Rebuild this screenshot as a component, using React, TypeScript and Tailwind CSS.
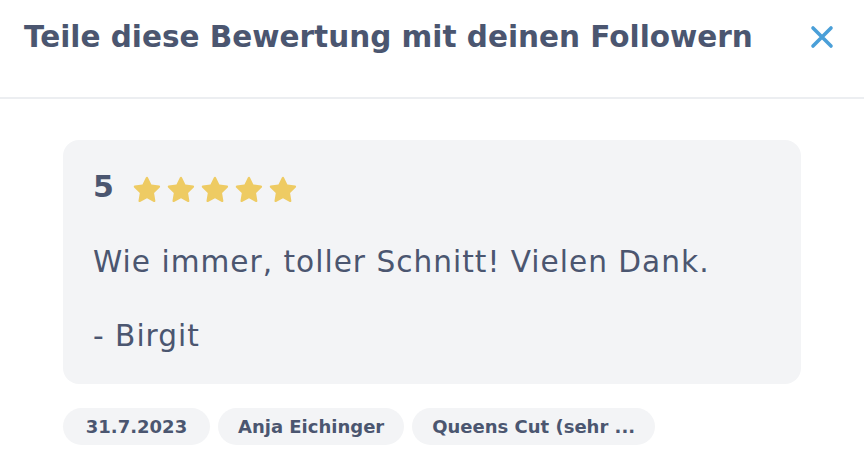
const Star = () => (
  <svg viewBox="0 0 24 24" className="w-[34px] h-[34px] shrink-0" fill="#eecb63">
    <path d="M12 2.6c.3 0 .6.2.7.5l2.4 5 5.5.8c.6.1.9.9.4 1.3l-4 3.9.9 5.5c.1.6-.5 1.1-1.1.8L12 17.8l-4.9 2.6c-.6.3-1.2-.2-1.1-.8l.9-5.5-4-3.9c-.5-.4-.2-1.2.4-1.3l5.5-.8 2.4-5c.2-.3.5-.5.8-.5z" />
  </svg>
)

export default function App() {
  const tags = ["31.7.2023", "Anja Eichinger", "Queens Cut (sehr ..."]

  return (
    <div className="w-[864px] h-[476px] bg-white text-[#4b5670] font-['DejaVu_Sans',sans-serif] overflow-hidden">
      {/* Header */}
      <div className="h-[99px] flex items-start justify-between pl-6 pr-[30px] pt-[23px] border-b-2 border-[#eceef1]">
        <h2 className="text-[29.5px] leading-none font-bold">
          Teile diese Bewertung mit deinen Followern
        </h2>
        <button className="text-[#4a9fd8] mt-[2px]">
          <svg viewBox="0 0 24 24" className="w-6 h-6" fill="none" stroke="currentColor" strokeWidth={3.6} strokeLinecap="round">
            <path d="M3 3l18 18M21 3L3 21" />
          </svg>
        </button>
      </div>

      {/* Review */}
      <div className="px-[63px] pt-[41px]">
        <div className="bg-[#f3f4f6] rounded-2xl pl-[30px] pr-6 pt-[32px] pb-[33px]">
          <div className="flex items-start gap-4">
            <span className="text-[30px] leading-none font-bold">5</span>
            <div className="flex mt-px">
              <Star />
              <Star />
              <Star />
              <Star />
              <Star />
            </div>
          </div>
          <p className="mt-[41px] text-[29.6px] leading-none tracking-[1px]">
            Wie immer, toller Schnitt! Vielen Dank.
          </p>
          <p className="mt-[44px] text-[29.6px] leading-none tracking-[1px]">- Birgit</p>
        </div>

        {/* Tags */}
        <div className="flex gap-2 mt-6">
          {tags.map((t) => (
            <span
              key={t}
              className="h-[37px] min-w-[147px] px-5 flex items-center justify-center rounded-full bg-[#f3f4f6] text-[18px] font-bold"
            >
              {t}
            </span>
          ))}
        </div>
      </div>
    </div>
  )
}
